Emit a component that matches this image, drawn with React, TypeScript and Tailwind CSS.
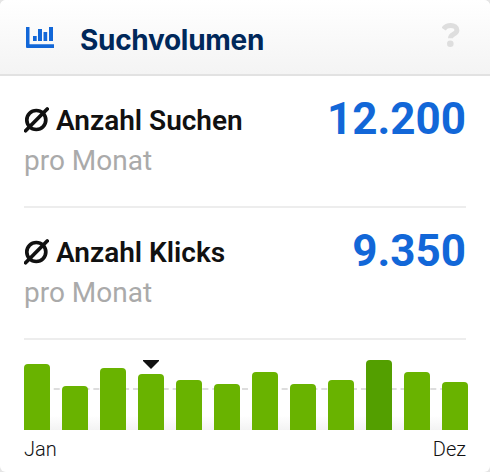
import React from "react";

interface StatRowProps {
  label: string;
  value: string;
}

const months = [
  { name: "Jan", height: 66 },
  { name: "Feb", height: 44 },
  { name: "Mär", height: 62 },
  { name: "Apr", height: 56, current: true },
  { name: "Mai", height: 50 },
  { name: "Jun", height: 46 },
  { name: "Jul", height: 58 },
  { name: "Aug", height: 46 },
  { name: "Sep", height: 50 },
  { name: "Okt", height: 70, peak: true },
  { name: "Nov", height: 58 },
  { name: "Dez", height: 48 },
];

const ChartIcon = () => (
  <svg className="h-[21px] w-7" viewBox="0 0 28 21" fill="#1267d8">
    <path d="M0 0h3.5v17.3H28V21H1a1 1 0 0 1-1-1z" />
    <path d="M7 9h3.7v5H7zM12 2h4v12h-4zM17.5 5h3.7v9h-3.7zM23 0h4v14h-4z" />
  </svg>
);

const HelpIcon = () => (
  <svg className="h-6 w-[18px]" viewBox="0 0 18 24" fill="none">
    <path
      d="M1.6 6C3.2 3.6 5.5 2.5 8.7 2.5c3.6 0 6.2 1.7 6.2 4.7 0 4.2-6.4 3.8-6.4 8"
      stroke="#dedede"
      strokeWidth="5"
    />
    <circle cx="8.3" cy="20.7" r="3.3" fill="#dedede" />
  </svg>
);

const AverageIcon = () => (
  <svg
    className="mb-0.5 h-[26px] w-[25px]"
    viewBox="0 0 25 26"
    fill="none"
    stroke="#111"
    strokeWidth="3.7"
    strokeLinecap="round"
  >
    <circle cx="12.3" cy="13" r="9.5" />
    <path d="M1.6 23.7 23.2 2" />
  </svg>
);

const StatRow: React.FC<StatRowProps> = ({ label, value }) => {
  return (
    <section className="mx-6 flex h-[132px] justify-between border-b-2 border-[#ededed]">
      <div className="pt-[25px]">
        <h3 className="flex h-10 items-center gap-[7px] text-[28px] font-semibold text-[#111]">
          <AverageIcon />
          {label}
        </h3>
        <p className="text-[28px] leading-10 text-[#aaa]">pro Monat</p>
      </div>
      <strong className="pt-[17px] text-[44px] leading-[52px] font-bold text-[#1267d8]">
        {value}
      </strong>
    </section>
  );
};

const App = () => {
  return (
    <div className="h-[472px] bg-[#e5e5e5] font-['Roboto',sans-serif]">
      <main className="h-full overflow-hidden rounded-[6px] bg-white">
        <header className="flex h-[76px] items-start border-b-2 border-[#e2e2e2] bg-linear-to-b from-white to-[#f4f4f4] pr-[30px] pl-[26px]">
          <div className="pt-[27px]">
            <ChartIcon />
          </div>
          <h2 className="grow pt-5 pl-[26px] font-['Inter',sans-serif] text-[28px] leading-10 font-bold tracking-[-0.3px] text-[#00285a]">
            Suchvolumen
          </h2>
          <div className="pt-[23px]">
            <HelpIcon />
          </div>
        </header>
        <StatRow label="Anzahl Suchen" value="12.200" />
        <StatRow label="Anzahl Klicks" value="9.350" />
        <div className="relative mx-6 mt-[18px] flex h-[72px] items-end gap-3 bg-linear-to-t from-[#f3f3f3] to-white to-20%">
          <svg className="absolute top-[30px] left-0 h-0.5 w-[442px]">
            <path d="M0 1h442" stroke="#ddd" strokeWidth="2" strokeDasharray="6 3.91" />
          </svg>
          {months.map((month) => (
            <div
              key={month.name}
              className={`relative w-[26px] shrink-0 rounded-t-[4px] ${
                month.peak ? "bg-[#539f00]" : "bg-[#69b300]"
              }`}
              style={{ height: month.height }}
            >
              {month.current && (
                <svg className="absolute -top-3.5 left-[5px] h-[9px] w-4" viewBox="0 0 16 9">
                  <path d="M0 0h16v1L8 9 0 1z" fill="#111" />
                </svg>
              )}
            </div>
          ))}
        </div>
        <div className="mx-6 flex justify-between pt-[5px] text-[20px] leading-7 font-[350] text-[#111]">
          <span>Jan</span>
          <span>Dez</span>
        </div>
      </main>
    </div>
  );
};

export default App;
